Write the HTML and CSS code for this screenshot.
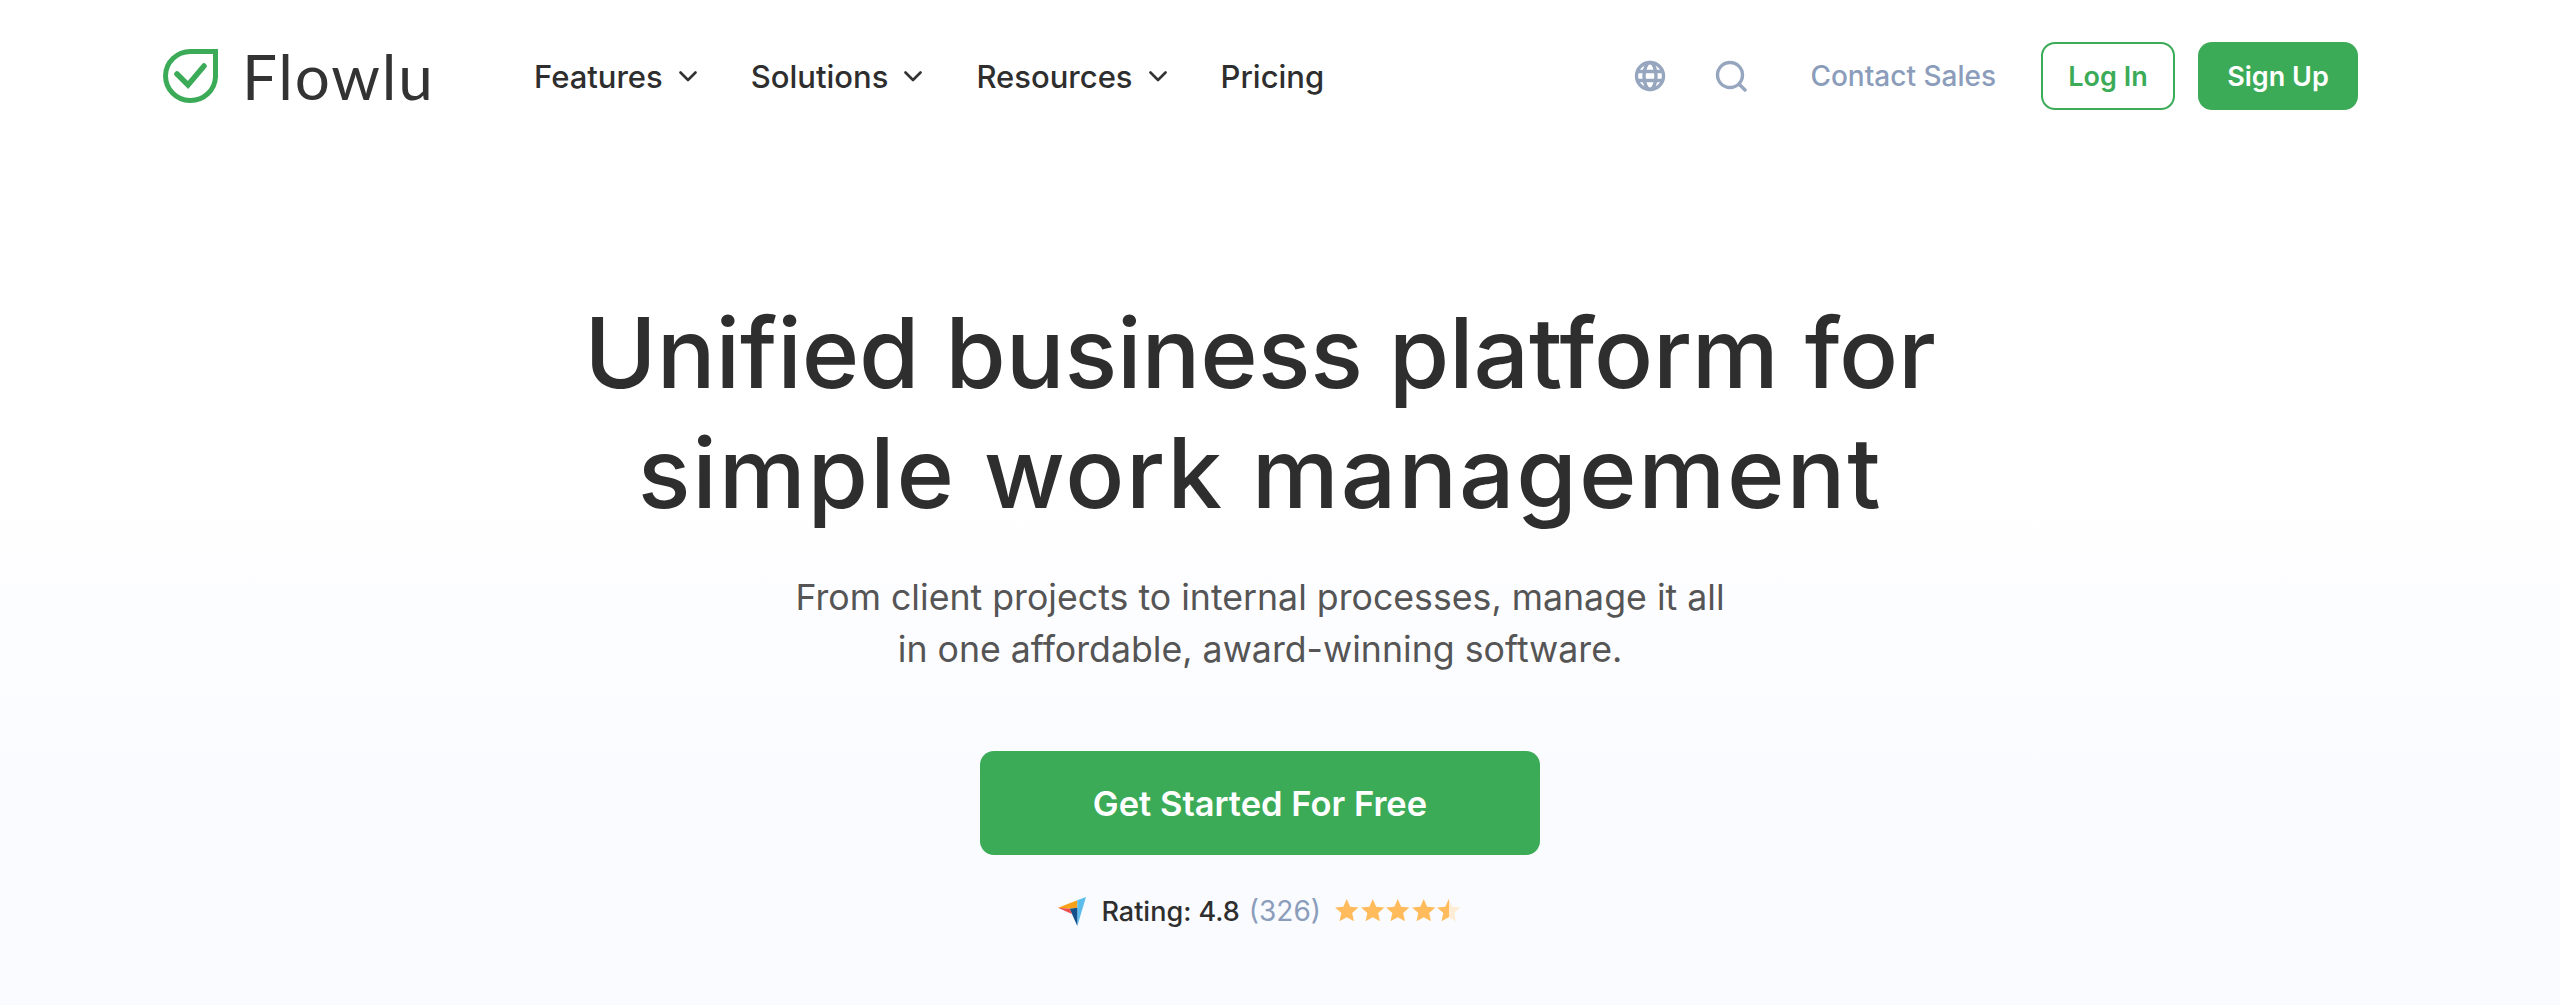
FILE: index.html
```html
<!DOCTYPE html>
<html lang="en">
<head>
    <meta charset="UTF-8">
    <meta name="viewport" content="width=device-width, initial-scale=1.0">
    <title>Flowlu</title>
    <link rel="stylesheet" href="styles.css">
</head>
<body>
    <svg class="defs" width="0" height="0">
        <defs>
            <path id="star" d="M12 1l3.2 7.2 7.8.8-5.9 5.2 1.7 7.7L12 18l-6.8 3.9 1.7-7.7L1 9l7.8-.8Z"/>
            <linearGradient id="halfFill">
                <stop offset="50%" stop-color="#ffbb5c"/>
                <stop offset="50%" stop-color="#ffecd4"/>
            </linearGradient>
        </defs>
    </svg>

    <div class="header">
        <a class="logo" href="#">
            <svg class="logo-icon" width="55" height="55" viewBox="0 0 55 55" fill="none">
                <path d="M52.5 2.5V28A25 24.5 0 1 1 27.5 2.5Z" stroke="#3cab58" stroke-width="5"/>
                <path d="M14 25l11 11 16-19" stroke="#3cab58" stroke-width="5.5" stroke-linecap="round" stroke-linejoin="miter"/>
            </svg>
            <span class="logo-text">Flowlu</span>
        </a>
        <div class="nav">
            <a class="nav-item" href="#">Features <svg class="chevron" width="18" height="11" viewBox="0 0 18 11"><path d="M1.5 1.5L9 9l7.5-7.5"/></svg></a>
            <a class="nav-item" href="#">Solutions <svg class="chevron" width="18" height="11" viewBox="0 0 18 11"><path d="M1.5 1.5L9 9l7.5-7.5"/></svg></a>
            <a class="nav-item" href="#">Resources <svg class="chevron" width="18" height="11" viewBox="0 0 18 11"><path d="M1.5 1.5L9 9l7.5-7.5"/></svg></a>
            <a class="nav-item" href="#">Pricing</a>
        </div>
        <div class="header-right">
            <svg class="tool-icon" width="32" height="32" viewBox="0 0 32 32" fill="none">
                <circle cx="16" cy="16" r="13.5"/>
                <ellipse cx="16" cy="16" rx="6" ry="13.5"/>
                <path d="M3 11.5H29M3 20.5H29"/>
            </svg>
            <svg class="tool-icon search-icon" width="32" height="32" viewBox="0 0 32 32" fill="none">
                <circle cx="15" cy="15" r="12.5"/>
                <path d="M25 25l5 5" stroke-linecap="round"/>
            </svg>
            <a class="contact" href="#">Contact Sales</a>
            <a class="btn btn-outline" href="#">Log In</a>
            <a class="btn btn-green" href="#">Sign Up</a>
        </div>
    </div>

    <div class="hero">
        <h1>Unified business platform for<br><span class="line-two">simple work management</span></h1>
        <p>From client projects to internal processes, manage it all<br>in one affordable, award-winning software.</p>
        <a class="cta" href="#">Get Started For Free</a>
        <div class="rating">
            <svg class="rating-logo" width="28" height="29" viewBox="0 0 28 29">
                <path d="M0 10.7L19.3 3.3V10.7L11.7 11.7Z" fill="#f9a11b"/>
                <path d="M28 0L19.3 3.3V29Z" fill="#5cbcec"/>
                <path d="M11.7 11.7L19.3 10.7V29Z" fill="#14508c"/>
                <path d="M0 10.7L11.7 11.7 14 17Z" fill="#ee4b4b"/>
            </svg>
            <span class="rating-label">Rating: 4.8</span>
            <span class="rating-count">(326)</span>
            <span class="stars">
                <svg class="star" viewBox="0 0 24 24"><use href="#star"/></svg>
                <svg class="star" viewBox="0 0 24 24"><use href="#star"/></svg>
                <svg class="star" viewBox="0 0 24 24"><use href="#star"/></svg>
                <svg class="star" viewBox="0 0 24 24"><use href="#star"/></svg>
                <svg class="star star-half" viewBox="0 0 24 24"><use href="#star"/></svg>
            </span>
        </div>
    </div>
</body>
</html>
```

FILE: styles.css
```css
* {
    box-sizing: border-box;
}

html, body {
    height: 100%;
}

body {
    margin: 0;
    font-family: 'Inter', 'Open Sans', sans-serif;
    color: #2e2e2e;
    background: linear-gradient(#ffffff 0, #ffffff 470px, #fafbff 780px, #fafbff 100%);
    overflow: hidden;
}

a {
    text-decoration: none;
    color: inherit;
}

.defs {
    position: absolute;
}

.header {
    display: flex;
    align-items: center;
    height: 152px;
    padding: 0 202px 0 163px;
}

.logo {
    display: flex;
    align-items: center;
    gap: 24px;
    width: 371px;
}

.logo-text {
    font-family: 'Lato', sans-serif;
    font-size: 62px;
    color: #333;
    letter-spacing: 1.8px;
}

.nav {
    display: flex;
    gap: 54px;
    flex: 1;
}

.nav-item {
    display: flex;
    align-items: center;
    gap: 16px;
    font-size: 31px;
    font-weight: 500;
}

.chevron path {
    fill: none;
    stroke: #333;
    stroke-width: 2.6;
    stroke-linecap: round;
    stroke-linejoin: round;
}

.header-right {
    display: flex;
    align-items: center;
}

.tool-icon circle, .tool-icon ellipse, .tool-icon path {
    stroke: #97a6bf;
    stroke-width: 3.4;
}

.search-icon {
    margin-left: 49px;
}

.contact {
    margin-left: 63px;
    font-size: 28px;
    font-weight: 500;
    color: #8b9dba;
}

.btn {
    display: flex;
    align-items: center;
    justify-content: center;
    height: 68px;
    border-radius: 14px;
    font-size: 27px;
    font-weight: 600;
}

.btn-outline {
    width: 134px;
    margin-left: 45px;
    border: 2px solid #3cab58;
    color: #3cab58;
}

.btn-green {
    width: 160px;
    margin-left: 23px;
    background: #3cab58;
    color: #fff;
}

.hero {
    display: flex;
    flex-direction: column;
    align-items: center;
    padding-right: 40px;
    text-align: center;
}

h1 {
    margin: 141px 0 0;
    font-size: 98px;
    line-height: 120px;
    font-weight: 500;
    letter-spacing: -0.2px;
    color: #2e2e2e;
}

.line-two {
    letter-spacing: 1.8px;
}

p {
    margin: 38px 0 0;
    font-size: 35.7px;
    line-height: 52px;
    color: #555;
}

.cta {
    display: flex;
    align-items: center;
    justify-content: center;
    width: 560px;
    height: 104px;
    margin-top: 76px;
    border-radius: 14px;
    background: #3cab58;
    color: #fff;
    font-size: 34.5px;
    font-weight: 600;
}

.rating {
    display: flex;
    align-items: center;
    margin-top: 39px;
    font-size: 27px;
}

.rating-logo {
    margin-right: 15px;
}

.rating-label {
    font-weight: 500;
}

.rating-count {
    margin-left: 9px;
    font-size: 28px;
    color: #8b9dba;
}

.stars {
    display: flex;
    margin-left: 13px;
}

.star {
    width: 25.5px;
    height: 25.5px;
    fill: #ffbb5c;
}

.star-half {
    fill: url(#halfFill);
}
```
